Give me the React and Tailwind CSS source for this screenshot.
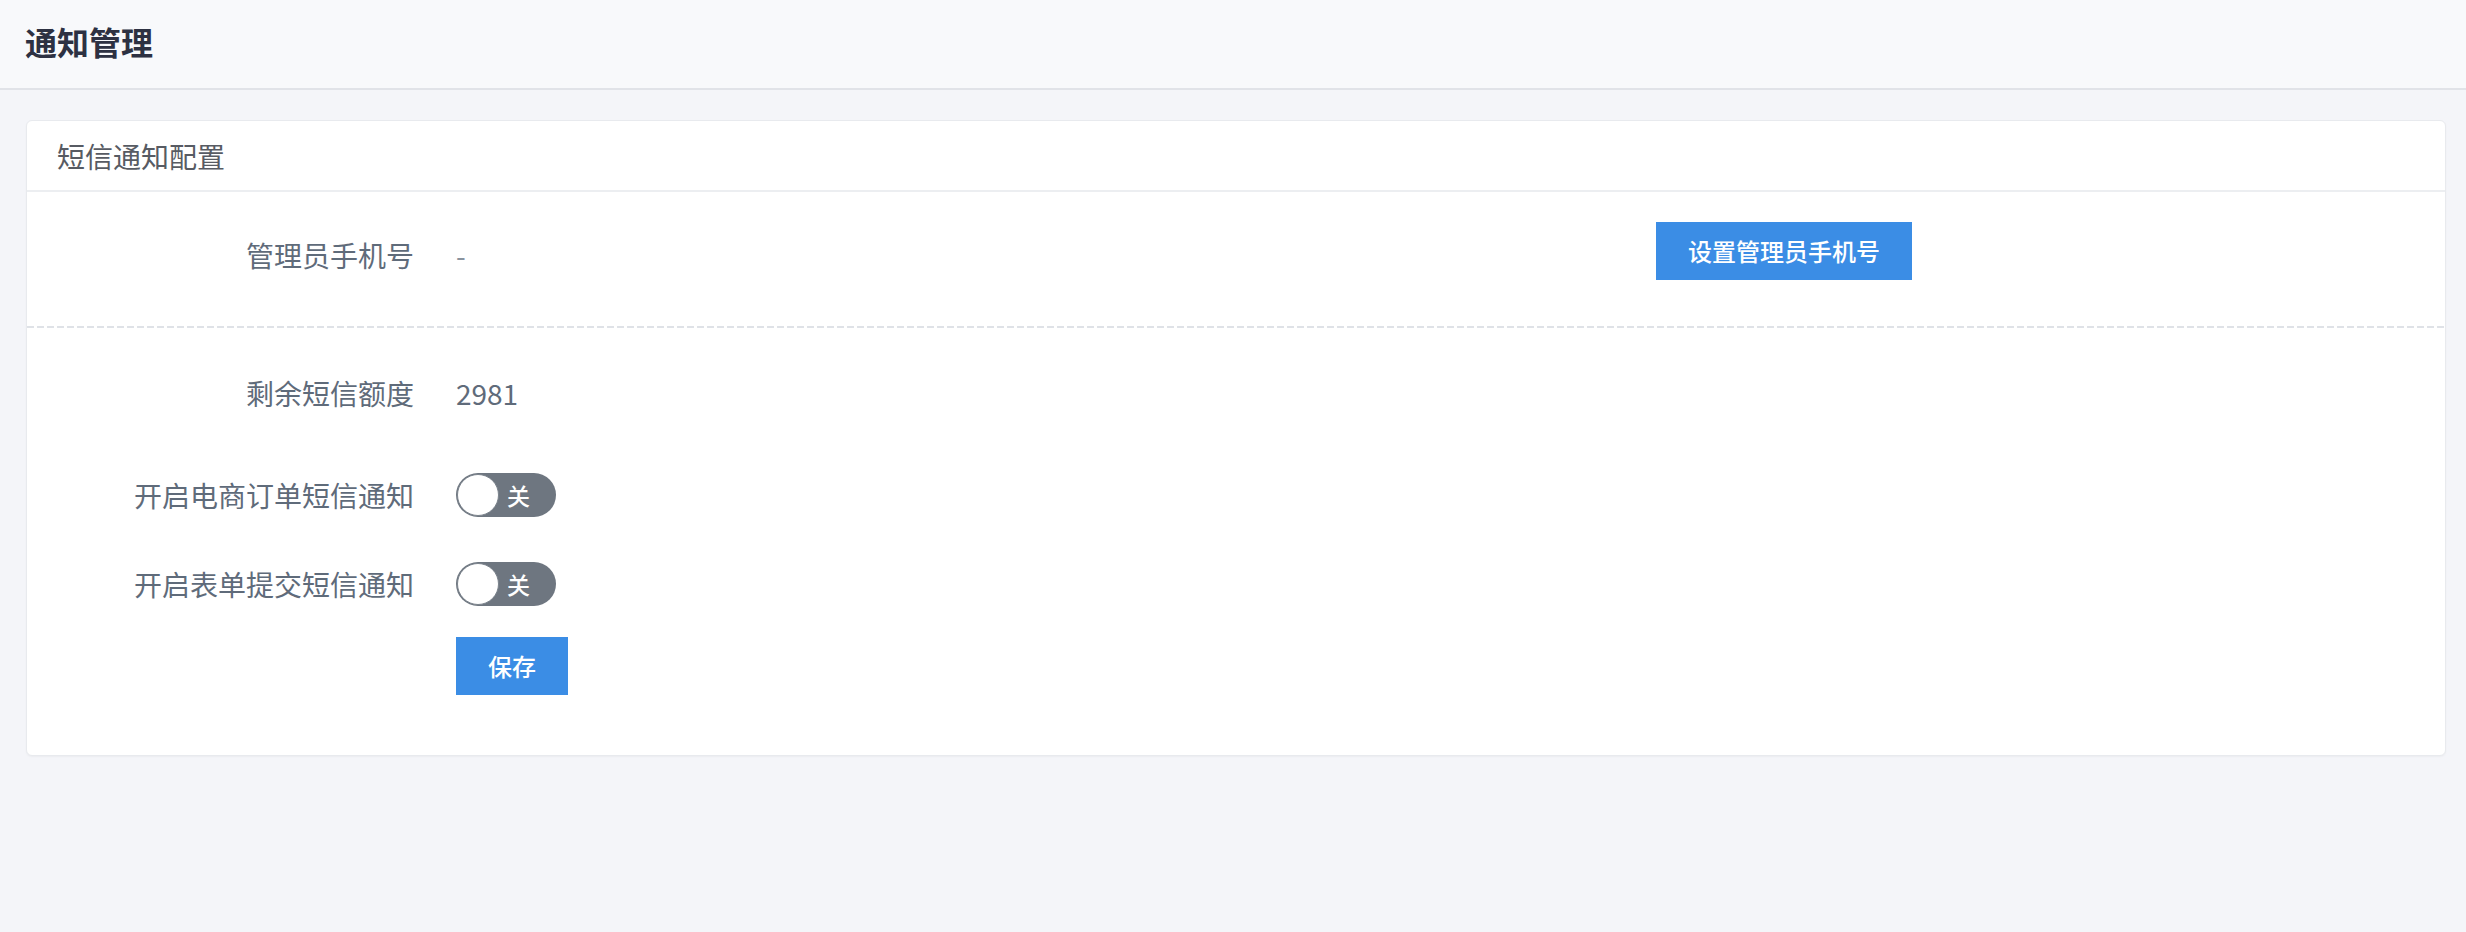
export default function App() {
  const Switch = () => (
    <div className="w-[100px] h-[44px] rounded-full bg-[#6e7680] flex items-center">
      <div className="w-[42px] h-[42px] ml-[1px] rounded-full bg-white border border-[#7b838c]" />
      <span className="ml-[8px] text-[23px] leading-none font-medium text-white">关</span>
    </div>
  );
  const Label = ({ children }) => (
    <div className="w-[387px] shrink-0 text-right text-[28px] leading-none text-[#5f6b7a]">{children}</div>
  );
  return (
    <div className="min-h-[932px] bg-[#f4f5f9] font-['Noto_Sans_CJK_SC','Noto_Sans',sans-serif]">
      <div className="h-[90px] border-b-2 border-[#e1e3e8] bg-[#f8f9fb] px-[25px] flex items-center">
        <div className="text-[32px] leading-none font-bold text-[#2d3142] -mt-[7px]">通知管理</div>
      </div>
      <div className="mt-[30px] ml-[26px] mr-[20px] bg-white rounded-[6px] border border-[#e8eaee] shadow-[0_1px_2px_rgba(0,0,0,0.04)]">
        <div className="h-[71px] border-b-2 border-[#eceef1] flex items-center pl-[30px]">
          <div className="text-[28px] leading-none text-[#575b63]">短信通知配置</div>
        </div>
        <div className="h-[134px] pb-[8px] flex items-center">
          <Label>管理员手机号</Label>
          <div className="ml-[42px] w-[1200px] shrink-0 text-[28px] leading-none text-[#8a939e]">-</div>
          <button className="mb-[8px] w-[256px] h-[58px] bg-[#3b8de5] text-white text-[24px] leading-none font-medium">设置管理员手机号</button>
        </div>
        <div className="h-[2px] bg-[repeating-linear-gradient(to_right,#dfe2e7_0_7px,transparent_7px_10px)]" />
        <div className="pt-[43px] pb-[60px]">
          <div className="h-[44px] flex items-center">
            <Label>剩余短信额度</Label>
            <div className="ml-[42px] text-[28px] leading-none text-[#5f6b7a]">2981</div>
          </div>
          <div className="mt-[58px] h-[44px] flex items-center">
            <Label>开启电商订单短信通知</Label>
            <div className="ml-[42px]"><Switch /></div>
          </div>
          <div className="mt-[45px] h-[44px] flex items-center">
            <Label>开启表单提交短信通知</Label>
            <div className="ml-[42px]"><Switch /></div>
          </div>
          <div className="mt-[31px] flex">
            <div className="w-[387px] shrink-0" />
            <button className="ml-[42px] w-[112px] h-[58px] bg-[#3b8de5] text-white text-[24px] leading-none font-medium">保存</button>
          </div>
        </div>
      </div>
    </div>
  );
}
